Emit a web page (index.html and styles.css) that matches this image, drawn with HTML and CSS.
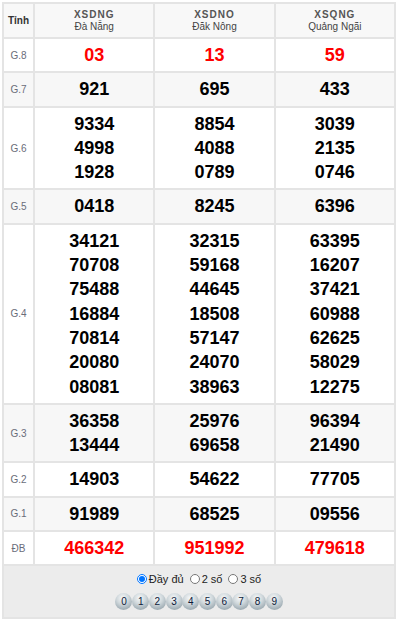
FILE: index.html
```html
<!DOCTYPE html>
<html lang="vi">
<head>
<meta charset="utf-8">
<title>KQXS Miền Trung</title>
<link rel="stylesheet" href="styles.css">
</head>
<body>
<table class="kq">
  <thead>
    <tr>
      <th class="lbl head-lbl">Tỉnh</th>
      <th><span class="code">XSDNG</span><span class="city">Đà Nẵng</span></th>
      <th><span class="code">XSDNO</span><span class="city">Đăk Nông</span></th>
      <th><span class="code">XSQNG</span><span class="city">Quảng Ngãi</span></th>
    </tr>
  </thead>
  <tbody>
    <tr>
      <td class="lbl">G.8</td>
      <td class="num red">03</td><td class="num red">13</td><td class="num red">59</td>
    </tr>
    <tr class="alt">
      <td class="lbl">G.7</td>
      <td class="num">921</td><td class="num">695</td><td class="num">433</td>
    </tr>
    <tr>
      <td class="lbl">G.6</td>
      <td class="num"><div>9334</div><div>4998</div><div>1928</div></td>
      <td class="num"><div>8854</div><div>4088</div><div>0789</div></td>
      <td class="num"><div>3039</div><div>2135</div><div>0746</div></td>
    </tr>
    <tr class="alt">
      <td class="lbl">G.5</td>
      <td class="num">0418</td><td class="num">8245</td><td class="num">6396</td>
    </tr>
    <tr>
      <td class="lbl">G.4</td>
      <td class="num"><div>34121</div><div>70708</div><div>75488</div><div>16884</div><div>70814</div><div>20080</div><div>08081</div></td>
      <td class="num"><div>32315</div><div>59168</div><div>44645</div><div>18508</div><div>57147</div><div>24070</div><div>38963</div></td>
      <td class="num"><div>63395</div><div>16207</div><div>37421</div><div>60988</div><div>62625</div><div>58029</div><div>12275</div></td>
    </tr>
    <tr class="alt">
      <td class="lbl">G.3</td>
      <td class="num"><div>36358</div><div>13444</div></td>
      <td class="num"><div>25976</div><div>69658</div></td>
      <td class="num"><div>96394</div><div>21490</div></td>
    </tr>
    <tr>
      <td class="lbl">G.2</td>
      <td class="num">14903</td><td class="num">54622</td><td class="num">77705</td>
    </tr>
    <tr class="alt">
      <td class="lbl">G.1</td>
      <td class="num">91989</td><td class="num">68525</td><td class="num">09556</td>
    </tr>
    <tr>
      <td class="lbl">ĐB</td>
      <td class="num red">466342</td><td class="num red">951992</td><td class="num red">479618</td>
    </tr>
    <tr>
      <td class="foot" colspan="4">
        <div class="opts">
          <label class="opt"><input type="radio" name="mode" checked>Đầy đủ</label>
          <label class="opt"><input type="radio" name="mode">2 số</label>
          <label class="opt"><input type="radio" name="mode">3 số</label>
        </div>
        <div class="balls">
          <span class="ball">0</span><span class="ball">1</span><span class="ball">2</span><span class="ball">3</span><span class="ball">4</span><span class="ball">5</span><span class="ball">6</span><span class="ball">7</span><span class="ball">8</span><span class="ball">9</span>
        </div>
      </td>
    </tr>
  </tbody>
</table>
</body>
</html>
```

FILE: styles.css
```css
html, body {
  margin: 0;
  padding: 0;
  background: #fff;
}
body {
  padding: 2px;
  font-family: "Liberation Sans", Arial, sans-serif;
}
.kq {
  width: 394px;
  border-collapse: separate;
  border-spacing: 0;
  border-left: 2px solid #e4e4e4;
  border-top: 2px solid #e4e4e4;
  table-layout: fixed;
}
.kq th, .kq td {
  border-right: 2px solid #e4e4e4;
  border-bottom: 2px solid #e4e4e4;
  padding: 0;
  text-align: center;
  vertical-align: middle;
}
.kq th {
  background: #f8f8f8;
  height: 33px;
  font-size: 10px;
  font-weight: normal;
  color: #333;
  line-height: 12px;
}
.kq th.lbl { width: 29px; }
.head-lbl { font-weight: bold !important; }
.code {
  display: block;
  font-weight: bold;
  letter-spacing: 1px;
  color: #555;
}
.city {
  display: block;
  color: #444;
}
.kq tr.alt td { background: #f7f7f7; }
.lbl {
  font-size: 10px;
  color: #6a6d7a;
}
.num {
  font-size: 18px;
  font-weight: bold;
  color: #000;
  line-height: 24.3px;
  padding: 4px 0 !important;
}
.num.red { color: #f00; }
.foot {
  background: #ececec;
  padding: 6px 0 7px !important;
}
.opts {
  display: flex;
  justify-content: center;
  align-items: center;
  gap: 6px;
  font-size: 11px;
  color: #222;
  height: 14px;
}
.opt {
  display: flex;
  align-items: center;
}
.opt input {
  width: 10px;
  height: 10px;
  margin: 0 2px 0 0;
}
.balls {
  display: flex;
  justify-content: center;
  margin-top: 7px;
}
.ball {
  width: 17px;
  height: 17px;
  margin-right: -0.3px;
  border-radius: 50%;
  background: radial-gradient(circle at 45% 30%, #f6f8f9 0%, #cfd7db 40%, #9aa8b0 80%, #7f8e97 100%);
  font-size: 10px;
  line-height: 17px;
  color: #0e1a3a;
  text-align: center;
}
```
